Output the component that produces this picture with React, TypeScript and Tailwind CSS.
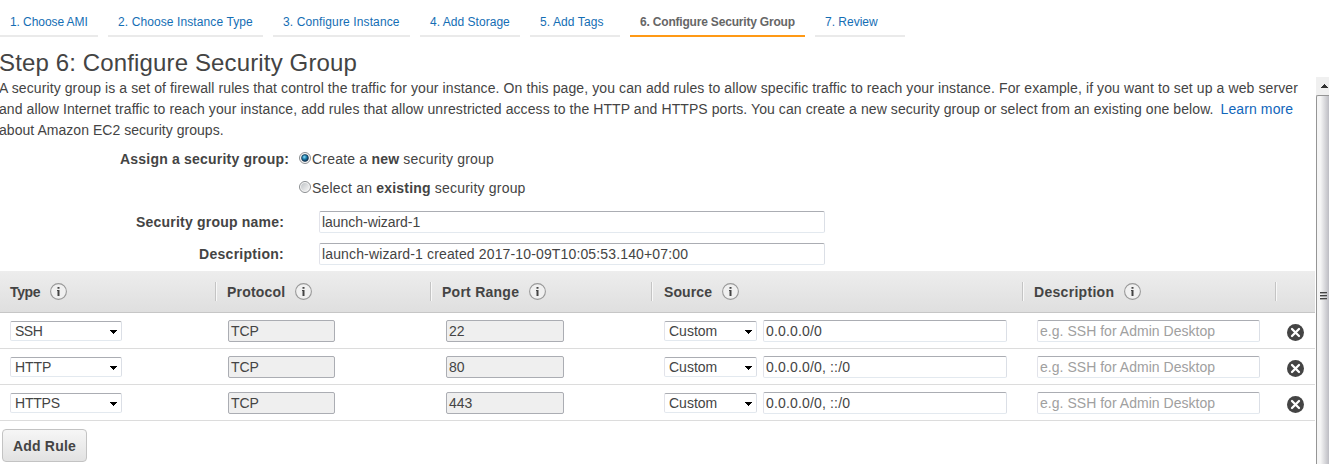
import React from "react";

const steps = [
  { label: "1. Choose AMI", width: "w-[98px]", track: "tracking-[-0.08px]" },
  { label: "2. Choose Instance Type", width: "w-[155px]", track: "tracking-[0.1px]" },
  { label: "3. Configure Instance", width: "w-[137px]", track: "tracking-[0.12px]" },
  { label: "4. Add Storage", width: "w-[100px]", track: "tracking-[0.03px]" },
  { label: "5. Add Tags", width: "w-[90px]", track: "tracking-[0.1px]" },
  { label: "6. Configure Security Group", width: "w-[175px]", track: "tracking-[-0.19px]", active: true },
  { label: "7. Review", width: "w-[90px]", track: "tracking-[0px]" },
];

const columns = [
  { label: "Type", width: "w-[215px]", pad: "pl-[10px]", track: "tracking-[-0.35px]" },
  { label: "Protocol", width: "w-[215px]", pad: "pl-[11px]", track: "tracking-[0.2px]" },
  { label: "Port Range", width: "w-[221px]", pad: "pl-[11px]", track: "tracking-[0.25px]" },
  { label: "Source", width: "w-[371px]", pad: "pl-[12px]", track: "tracking-[0.1px]" },
  { label: "Description", width: "w-[253px]", pad: "pl-[11px]", track: "tracking-[0.3px]" },
  { label: "", width: "w-[40px]", pad: "", track: "" },
];

const rules = [
  { type: "SSH", port: "22", source: "0.0.0.0/0", track: "tracking-[-0.5px]" },
  { type: "HTTP", port: "80", source: "0.0.0.0/0, ::/0", track: "tracking-[-0.1px]" },
  { type: "HTTPS", port: "443", source: "0.0.0.0/0, ::/0", track: "tracking-[-0.2px]" },
];

const editable = "border-t-[#abadb3] border-r-[#dbdfe6] border-b-[#e3e9ef] border-l-[#e2e3ea] bg-white";

function Field({ children, className = "" }: { children: React.ReactNode; className?: string }) {
  return (
    <div className={`flex h-[22px] items-center overflow-hidden rounded-[2px] border pl-[2px] whitespace-nowrap ${className}`}>
      <span>{children}</span>
    </div>
  );
}

function Select({ children, className = "" }: { children: React.ReactNode; className?: string }) {
  return (
    <div className={`flex h-5 items-center justify-between rounded-[2px] border pr-1 pl-1 ${editable} ${className}`}>
      <span className="pt-px">{children}</span>
      <svg width="7" height="4" className="mt-[2px]" shapeRendering="crispEdges">
        <path d="M0 0h7v1H6v1H5v1H4v1H3V3H2V2H1V1H0z" fill="#000" />
      </svg>
    </div>
  );
}

function Info() {
  return (
    <svg width="17" height="17" viewBox="0 0 17 17" className="mb-px shrink-0">
      <circle cx="8.5" cy="8.5" r="7.9" fill="#f0f0f0" stroke="#999" strokeWidth="1.1" />
      <path d="M7.5 4h2v1.8h-2zM7 7h2.5v6h-2V8H7z" fill="#444" />
    </svg>
  );
}

function Remove() {
  return (
    <svg width="17" height="17" viewBox="0 0 17 17">
      <circle cx="8.5" cy="8.5" r="8.5" fill="#444" />
      <path d="M5 5l7 7M12 5l-7 7" stroke="#fff" strokeWidth="2.3" strokeLinecap="round" />
    </svg>
  );
}

function Radio({ checked = false }: { checked?: boolean }) {
  return (
    <svg width="12" height="12" viewBox="0 0 12 12" className="mb-[2px] shrink-0">
      <defs>
        <linearGradient id="ring" x1="0" y1="0" x2="1" y2="1">
          <stop offset="0" stopColor="#bfc3c6" />
          <stop offset="1" stopColor="#f6f6f6" />
        </linearGradient>
        <radialGradient id="dot" cx=".4" cy=".35" r=".65">
          <stop offset="0" stopColor="#8fe0fa" />
          <stop offset=".5" stopColor="#1c7fae" />
          <stop offset="1" stopColor="#0b2f50" />
        </radialGradient>
      </defs>
      <circle cx="6" cy="6" r="5.5" fill="#f7f7f7" stroke="#8b8e91" />
      <circle cx="6" cy="6" r="4" fill="url(#ring)" />
      {checked && <circle cx="6" cy="6" r="3.4" fill="url(#dot)" stroke="#17354f" strokeWidth=".7" />}
    </svg>
  );
}

export default function App() {
  return (
    <div className="flex h-[464px] w-[1329px] flex-col overflow-hidden bg-white font-['Liberation_Sans',Arial,sans-serif] text-[14px] leading-[21px] text-[#444]">
      <nav className="flex h-[37px] shrink-0 gap-[10px] text-[12px]">
        {steps.map((s) => (
          <div
            key={s.label}
            className={`${s.width} ${s.track} shrink-0 border-b-2 whitespace-nowrap pt-[12px] pl-[10px] ${
              s.active ? "border-[#ff9915] font-bold text-[#666]" : "border-[#eaeaea] text-[#146eb4]"
            }`}
          >
            <span>{s.label}</span>
          </div>
        ))}
      </nav>
      <h1 className="-ml-px h-[40px] shrink-0 pt-[11px] text-[24px] leading-[30px] tracking-[0.14px]">
        <span>Step 6: Configure Security Group</span>
      </h1>
      <div className="flex h-[387px] shrink-0">
        <main className="w-[1315px] shrink-0">
          <div className="-ml-px h-[71px] whitespace-nowrap pt-px">
            <div><span className="tracking-[0.104px]">A security group is a set of firewall rules that control the traffic for your instance. On this page, you can add rules to allow specific traffic to reach your instance. For example, if you want to set up a web server</span></div>
            <div>
              <span className="tracking-[0.086px]">and allow Internet traffic to reach your instance, add rules that allow unrestricted access to the HTTP and HTTPS ports. You can create a new security group or select from an existing one below.</span>
              <a className="ml-[7px] tracking-[0.1px] text-[#1166bb]">Learn more</a>
            </div>
            <div><span className="tracking-[0.04px]">about Amazon EC2 security groups.</span></div>
          </div>
          <div className="flex h-[22px] items-center tracking-[0.2px]">
            <b className="w-[289px] text-right">Assign a security group:</b>
            <label className="ml-[10px] flex items-center gap-px">
              <Radio checked />
              <span>Create a <b>new</b> security group</span>
            </label>
          </div>
          <div className="mt-[7px] flex h-[22px] items-center pl-[299px] tracking-[0.2px]">
            <label className="flex items-center gap-px">
              <Radio />
              <span>Select an <b>existing</b> security group</span>
            </label>
          </div>
          <div className="mt-[12px] flex h-[22px] items-center">
            <b className="w-[284px] text-right tracking-[0.2px]">Security group name:</b>
            <Field className={`ml-[35px] w-[506px] tracking-[-0.04px] ${editable}`}>launch-wizard-1</Field>
          </div>
          <div className="mt-[10px] flex h-[22px] items-center">
            <b className="w-[284px] text-right tracking-[0.27px]">Description:</b>
            <Field className={`ml-[35px] w-[506px] tracking-[0.145px] ${editable}`}>launch-wizard-1 created 2017-10-09T10:05:53.140+07:00</Field>
          </div>
          <div className="mt-[6px] flex h-[42px] items-center border-b border-[#c6c6c6] bg-linear-to-b from-[#ededed] to-[#dfdfdf]">
            {columns.map((c, i) => (
              <div
                key={i}
                className={`${c.width} ${c.pad} flex h-[19px] shrink-0 items-center font-bold ${
                  i > 0 ? "border-l border-[#c4c4c4] shadow-[inset_1px_0_0_#f8f8f8]" : ""
                }`}
              >
                {c.label && (
                  <div className="flex items-center gap-[9.6px]">
                    <span className={`pt-px ${c.track}`}>{c.label}</span>
                    <Info />
                  </div>
                )}
              </div>
            ))}
          </div>
          {rules.map((r) => (
            <div key={r.type} className="flex h-[36px] items-center border-b border-[#dcdcdc]">
              <Select className={`ml-[10px] w-[112px] ${r.track}`}>{r.type}</Select>
              <Field className="ml-[106px] w-[107px] border-[#abadb3] bg-[#efefef] pt-px tracking-[-0.1px]">TCP</Field>
              <Field className="ml-[111px] w-[118px] border-[#abadb3] bg-[#efefef] pt-px">{r.port}</Field>
              <Select className="ml-[100px] w-[93px]">Custom</Select>
              <Field className={`ml-[6px] w-[244px] pt-px tracking-[0.16px] ${editable}`}>{r.source}</Field>
              <Field className={`ml-[30px] w-[223px] pt-px tracking-[0.03px] text-[#a0a0a0] ${editable}`}>e.g. SSH for Admin Desktop</Field>
              <div className="mt-[3px] ml-[27px]"><Remove /></div>
            </div>
          ))}
          <button className="mt-2 ml-[2px] flex h-[33px] w-[85px] items-center justify-center rounded-[4px] border border-[#c3c3c3] bg-linear-to-b from-[#f6f6f6] to-[#e2e2e2] pt-[2px] font-bold tracking-[0.22px]">
            <span>Add Rule</span>
          </button>
        </main>
        <aside className="ml-px flex w-[13px] flex-col bg-[#f0f0f0]">
          <div className="flex h-[18px] items-center justify-center pl-1">
            <svg width="7" height="4" shapeRendering="crispEdges">
              <path d="M3 0h1v1h1v1h1v1h1v1H0V3h1V2h1V1h1z" fill="#333" />
            </svg>
          </div>
          <div className="flex flex-1 justify-center rounded-tl-[2px] border-t border-l border-[#959595] bg-linear-to-r from-[#f5f5f5] from-30% to-[#bdbdc3] pt-[196px] pl-0">
            <svg width="8" height="9" className="ml-px" shapeRendering="crispEdges">
              <path d="M0 0h7v1H0zM0 3h7v1H0zM0 6h7v1H0z" fill="#444" />
              <path d="M0 1h7v1H0zM0 4h7v1H0zM0 7h7v1H0z" fill="#aaa" />
            </svg>
          </div>
        </aside>
      </div>
    </div>
  );
}
